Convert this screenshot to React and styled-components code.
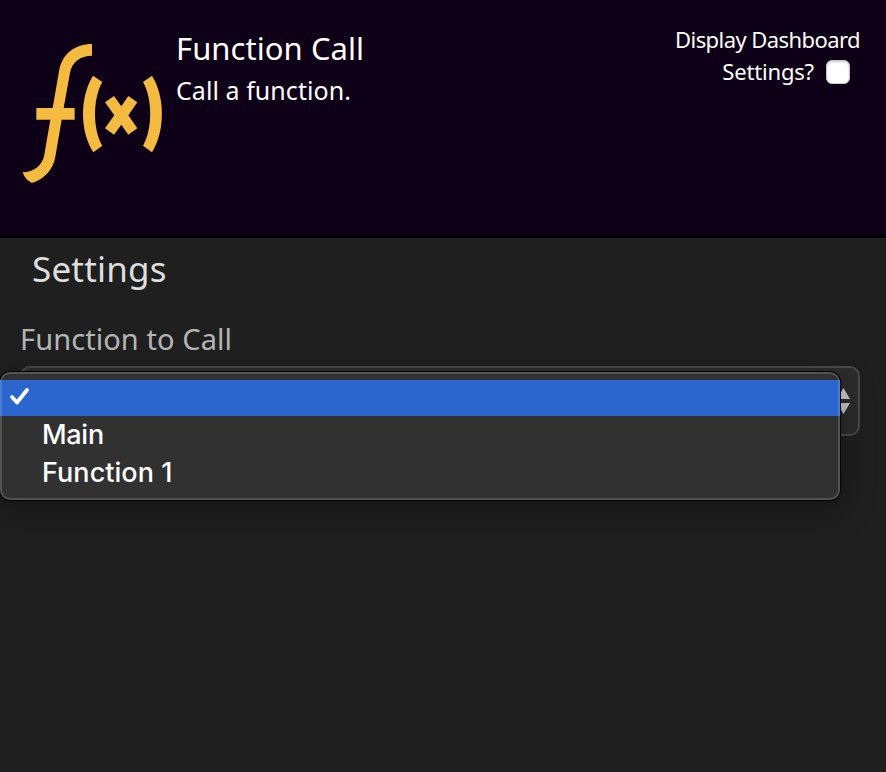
import React from "react";
import styled, { createGlobalStyle } from "styled-components";

const GlobalStyle = createGlobalStyle`
  * { box-sizing: border-box; }
  html, body { margin: 0; background: #1f1f1f; }
  body { font-family: "Noto Sans", "Open Sans", sans-serif; overflow: hidden; }
`;

const Page = styled.div`
  display: flex;
  flex-direction: column;
  width: 886px;
  height: 772px;
  background: #1f1f1f;
  overflow: hidden;
`;

const Header = styled.header`
  display: flex;
  height: 238px;
  padding: 30px 26px 0 10px;
  background: #0e0017;
  border-bottom: 4px solid #000;
  color: #fff;
`;

const Logo = styled.svg`
  flex: none;
  width: 170px;
  height: 165px;
  fill: #f5bb41;
`;

const Text = styled.span`
  display: block;
  width: max-content;
  white-space: nowrap;
  font-size: ${(p) => p.$size}px;
  line-height: ${(p) => p.$line}px;
  letter-spacing: ${(p) => p.$spacing || 0}px;
  color: ${(p) => p.$color || "#fff"};
`;

const Titles = styled.div`
  flex: 1;
  margin: -2px 0 0 -4px;
`;

const DashboardToggle = styled.label`
  display: flex;
  flex-direction: column;
  align-items: flex-end;
  margin-top: -6px;
`;

const ToggleRow = styled.span`
  display: flex;
  align-items: center;
  gap: 12px;
  margin-right: 10px;
`;

const Checkbox = styled.span`
  width: 24px;
  height: 24px;
  margin-top: 2px;
  border-radius: 6px;
  background: #fff;
  border: 1px solid #c9c6cb;
  box-shadow: inset 0 1px 2px #ccc;
`;

const Body = styled.main`
  flex: 1;
  padding: 0 26px 0 20px;
`;

const Heading = styled.h1`
  margin: 0;
  padding: 7px 0 0 12px;
  font-weight: 400;
`;

const Field = styled.div`
  position: relative;
  margin-top: 24px;
`;

const SelectBox = styled.div`
  display: flex;
  align-items: center;
  justify-content: flex-end;
  height: 70px;
  margin-top: 5px;
  padding-right: 8px;
  border: 2px solid #4a4a4a;
  border-radius: 10px;
  background: #2c2c2c;
`;

const Arrows = styled.svg`
  width: 13px;
  height: 26px;
  fill: #c8c8c8;
`;

const Menu = styled.ul`
  position: absolute;
  left: -20px;
  top: 55px;
  width: 840px;
  height: 128px;
  margin: 0;
  padding: 6px 0 0;
  list-style: none;
  border: 2px solid #535353;
  border-radius: 10px;
  background: #313131;
  box-shadow: 0 0 0 1px #050505, 0 10px 34px rgba(0, 0, 0, 0.38);
`;

const Option = styled.li`
  display: flex;
  align-items: center;
  height: ${(p) => (p.$selected ? 36 : 38)}px;
  margin: 0 -2px;
  padding-left: ${(p) => (p.$selected ? 7 : 40)}px;
  border: 0 solid ${(p) => (p.$selected ? "#4a7dd3" : "transparent")};
  border-width: 0 2px;
  background: ${(p) => (p.$selected ? "#2a66cd" : "transparent")};
  background-clip: padding-box;
  color: #fff;
  font: 500 27px/36px Inter, sans-serif;
  letter-spacing: ${(p) => p.$spacing || 0}px;
`;

const Check = styled.svg`
  width: 22px;
  height: 20px;
  margin-top: -4px;
  fill: none;
  stroke: #fff;
  stroke-width: 3.8;
  stroke-linecap: round;
  stroke-linejoin: round;
`;

export default function App() {
  return (
    <Page>
      <GlobalStyle />
      <Header>
        <Logo viewBox="0 0 510 495">
          <path d="M246 42C196 42 156 70 147 124L128 234H79V269H121L103 374C97 407 72 425 38 427Q45 449 66 459C105 446 130 417 136 380L155 269H194V234H161L180 128C186 96 211 77 246 77Z" />
          <path d="M249 137L277 156C248 206 248 298 277 347L250 367C209 303 209 201 249 137Z" />
          <path d="M426 137L399 156C428 206 428 298 399 347L426 367C466 303 466 201 426 137Z" />
          <path d="M285 217L312 198L334 229L355 198L382 217L355 256L382 295L355 314L334 284L312 314L285 295L313 256Z" />
        </Logo>
        <Titles>
          <Text $size={31} $line={41} $spacing={0.05}>Function Call</Text>
          <Text $size={25} $line={42} $spacing={0.06}>Call a function.</Text>
        </Titles>
        <DashboardToggle>
          <Text $size={22} $line={31} $spacing={-0.57}>Display Dashboard</Text>
          <ToggleRow>
            <Text $size={22} $line={32} $spacing={-0.17}>Settings?</Text>
            <Checkbox />
          </ToggleRow>
        </DashboardToggle>
      </Header>
      <Body>
        <Heading>
          <Text $size={35} $line={48} $spacing={0.2} $color="#dedede">Settings</Text>
        </Heading>
        <Field>
          <Text $size={29} $line={44} $spacing={0.08} $color="#b5b5b5">Function to Call</Text>
          <SelectBox>
            <Arrows viewBox="0 0 13 26">
              <path d="M6.5 0L13 11H0ZM0 15H13L6.5 26Z" />
            </Arrows>
          </SelectBox>
          <Menu>
            <Option $selected>
              <Check viewBox="0 0 22 20">
                <path d="M3 11L8 16.5L18 4" />
              </Check>
            </Option>
            <Option $spacing={-0.3}>Main</Option>
            <Option $spacing={0.05}>Function 1</Option>
          </Menu>
        </Field>
      </Body>
    </Page>
  );
}
